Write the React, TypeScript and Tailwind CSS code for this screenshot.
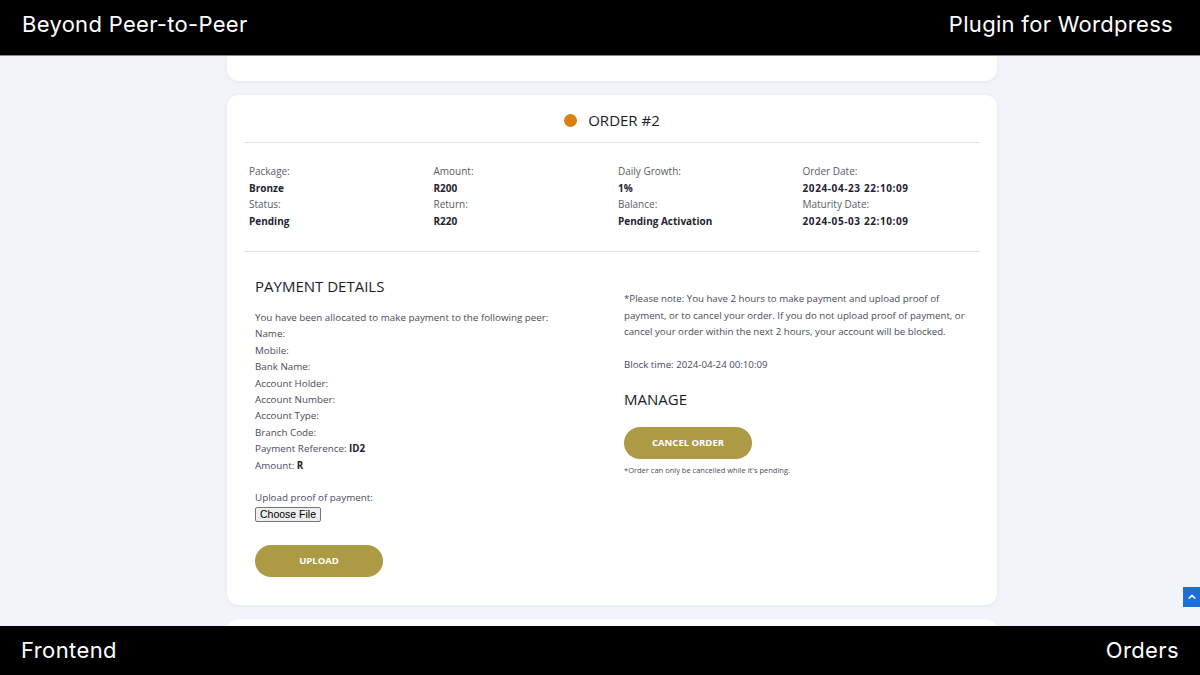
import React from 'react';

const orderInfo = [
  { label: 'Package:', value: 'Bronze' },
  { label: 'Amount:', value: 'R200' },
  { label: 'Daily Growth:', value: '1%' },
  { label: 'Order Date:', value: '2024-04-23 22:10:09', date: true },
  { label: 'Status:', value: 'Pending' },
  { label: 'Return:', value: 'R220' },
  { label: 'Balance:', value: 'Pending Activation' },
  { label: 'Maturity Date:', value: '2024-05-03 22:10:09', date: true },
];

const peerFields = [
  'Name:',
  'Mobile:',
  'Bank Name:',
  'Account Holder:',
  'Account Number:',
  'Account Type:',
  'Branch Code:',
];

const App = () => {
  return (
    <div className="relative h-[675px] w-[1200px] overflow-hidden bg-[#f1f5f9] font-['Open_Sans','Noto_Sans',sans-serif]">
      {/* Top caption bar */}
      <div className="flex h-[56px] items-center justify-between border-b border-[#8a8a8a] bg-black pr-[27px] pb-[6px] pl-[22px] font-['Inter',sans-serif] text-[22px] tracking-[0.3px] text-white">
        <span>Beyond Peer-to-Peer</span>
        <span>Plugin for Wordpress</span>
      </div>

      <div className="ml-[227px] flex w-[770px] flex-col gap-[14px]">
        {/* Previous card tail */}
        <div className="h-[25px] rounded-b-[12px] bg-white shadow-[0_1px_4px_rgba(0,0,0,0.06)]" />

        {/* Order card */}
        <div className="rounded-[12px] bg-white px-[17px] pb-[28px] shadow-[0_1px_4px_rgba(0,0,0,0.06)]">
          <div className="flex h-[48px] items-center justify-center gap-[11px] border-b border-[#e2e2e2] pt-[4px]">
            <span className="h-[13px] w-[13px] rounded-full bg-[#dc7f12]" />
            <span className="text-[15px] text-[#1c1c2b]">ORDER #2</span>
          </div>

          <div className="grid grid-cols-[repeat(4,184.5px)] border-b border-[#e2e2e2] pt-[20px] pb-[22px] pl-[5px] text-[10px] leading-[16.5px] text-[#3a3a48]">
            {orderInfo.map((item) => (
              <div key={item.label} className="flex flex-col">
                <span className="text-[#5b5b66]">{item.label}</span>
                <span className={item.date ? 'font-bold tracking-[0.6px] text-[#23232f]' : 'font-bold text-[#23232f]'}>
                  {item.value}
                </span>
              </div>
            ))}
          </div>

          <div className="grid grid-cols-[369px_1fr] pt-[24px] pl-[11px]">
            {/* Payment details */}
            <div className="flex flex-col text-[9.8px] leading-[16.4px] text-[#4a4a5a]">
              <h3 className="mb-[14px] text-[15px] leading-[20px] text-[#1c1c2b]">PAYMENT DETAILS</h3>
              <p>You have been allocated to make payment to the following peer:</p>
              {peerFields.map((f) => (
                <p key={f}>{f}</p>
              ))}
              <p>
                Payment Reference: <b className="text-[#1c1c2b]">ID2</b>
              </p>
              <p>
                Amount: <b className="text-[#1c1c2b]">R</b>
              </p>
              <p className="mt-[16px]">Upload proof of payment:</p>
              <div>
                <button className="mt-[1px] rounded-[2px] border border-[#767676] bg-[#efefef] px-[4px] font-['Liberation_Sans',sans-serif] text-[10.5px] leading-[13px] text-black">
                  Choose File
                </button>
              </div>
              <div className="mt-[21px]">
                <button className="h-[32px] w-[128px] rounded-full bg-[#ad9a45] text-[9.5px] font-bold text-white">
                  UPLOAD
                </button>
              </div>
            </div>

            {/* Note and manage */}
            <div className="flex flex-col pt-[15px] text-[9.7px] leading-[16.5px] text-[#4a4a5a]">
              <p className="w-[350px]">
                *Please note: You have 2 hours to make payment and upload proof of payment, or to cancel your order. If you do not upload proof of payment, or cancel your order within the next 2 hours, your account will be blocked.
              </p>
              <p className="mt-[16px]">Block time: 2024-04-24 00:10:09</p>
              <h3 className="mt-[16px] text-[15px] leading-[20px] text-[#1c1c2b]">MANAGE</h3>
              <div className="mt-[18px]">
                <button className="h-[32px] w-[128px] rounded-full bg-[#ad9a45] text-[9.5px] font-bold text-white">
                  CANCEL ORDER
                </button>
              </div>
              <p className="mt-[5px] text-[7.5px] leading-[12px]">*Order can only be cancelled while it's pending.</p>
            </div>
          </div>
        </div>

        {/* Next card head */}
        <div className="h-[30px] rounded-t-[12px] bg-white" />
      </div>

      {/* Scroll to top */}
      <button className="absolute right-0 top-[587px] flex h-[20px] w-[17px] items-center justify-center bg-[#1e6fd9]">
        <svg width="10" height="10" viewBox="0 0 24 24" fill="none" stroke="white" strokeWidth="3.5" strokeLinecap="round" strokeLinejoin="round">
          <path d="M5 15l7-7 7 7" />
        </svg>
      </button>

      {/* Bottom caption bar */}
      <div className="absolute bottom-0 left-0 flex h-[49px] w-full items-center justify-between bg-black px-[21px] font-['Inter',sans-serif] text-[22px] tracking-[0.4px] text-white">
        <span>Frontend</span>
        <span>Orders</span>
      </div>
    </div>
  );
};

export default App;
